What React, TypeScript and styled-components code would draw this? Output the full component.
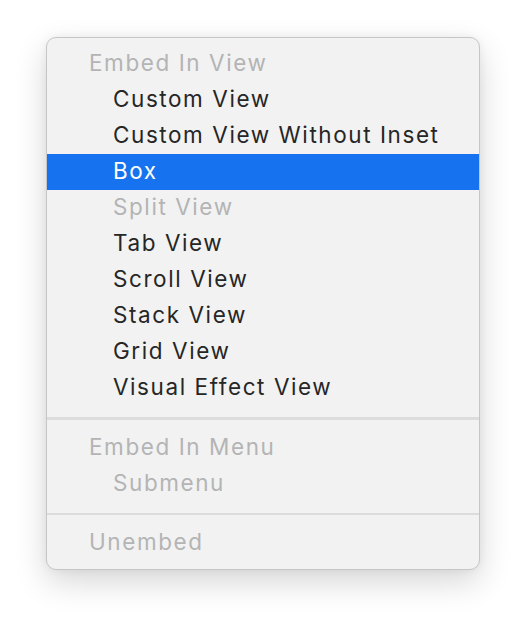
import styled, { createGlobalStyle } from "styled-components";

const GlobalStyle = createGlobalStyle`
    html, body {
        margin: 0;
        padding: 0;
        background: #ffffff;
    }
`;

type Item = { label: string; kind: "header" | "item" | "disabled" | "selected" } | { kind: "separator" };

const items: Item[] = [
    { label: "Embed In View", kind: "header" },
    { label: "Custom View", kind: "item" },
    { label: "Custom View Without Inset", kind: "item" },
    { label: "Box", kind: "selected" },
    { label: "Split View", kind: "disabled" },
    { label: "Tab View", kind: "item" },
    { label: "Scroll View", kind: "item" },
    { label: "Stack View", kind: "item" },
    { label: "Grid View", kind: "item" },
    { label: "Visual Effect View", kind: "item" },
    { kind: "separator" },
    { label: "Embed In Menu", kind: "header" },
    { label: "Submenu", kind: "disabled" },
    { kind: "separator" },
    { label: "Unembed", kind: "header" },
];

export default function App() {
    return (
        <>
            <GlobalStyle />
            <Page>
                <Menu>
                    {items.map((it, i) =>
                        it.kind === "separator" ? (
                            <Separator key={i} />
                        ) : (
                            <Row key={i} $kind={it.kind}>
                                {it.label}
                            </Row>
                        )
                    )}
                </Menu>
            </Page>
        </>
    );
}

const Page = styled.div`
    width: 526px;
    height: 624px;
    padding: 37px 0 0 46px;
    box-sizing: border-box;
`;

const Menu = styled.div`
    width: 434px;
    height: 533px;
    box-sizing: border-box;
    padding: 8px 0;
    background: #f2f2f2;
    border: 1px solid #c6c6c6;
    border-radius: 10px;
    box-shadow: 0 12px 32px rgba(0, 0, 0, 0.16), 0 0 8px rgba(0, 0, 0, 0.06);
    display: flex;
    flex-direction: column;
    font-family: Inter, "Liberation Sans", Arial, sans-serif;
`;

const Row = styled.div<{ $kind: string }>`
    height: 36px;
    box-sizing: border-box;
    padding-bottom: 2px;
    line-height: 34px;
    font-size: 22.5px;
    letter-spacing: 0.07em;
    padding-left: ${(p) => (p.$kind === "header" ? "42px" : "66px")};
    color: ${(p) =>
        p.$kind === "selected"
            ? "#ffffff"
            : p.$kind === "item"
            ? "#262626"
            : "#b4b4b4"};
    background: ${(p) => (p.$kind === "selected" ? "#1672ee" : "transparent")};
    white-space: nowrap;
`;

const Separator = styled.div`
    height: 3px;
    margin: 11px 0 10px;
    background: #dcdcdc;
`;
